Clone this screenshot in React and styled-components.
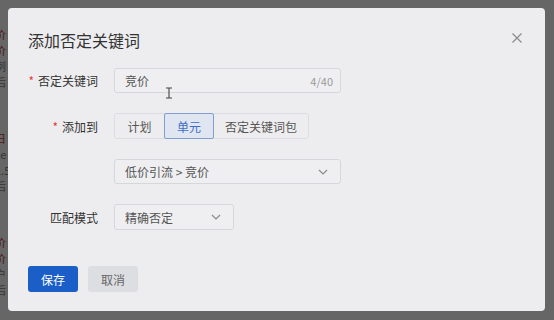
import React from 'react';
import styled, { createGlobalStyle } from 'styled-components';

const GlobalStyle = createGlobalStyle`
  html, body {
    margin: 0;
    padding: 0;
    width: 554px;
    height: 320px;
    overflow: hidden;
    background: #ffffff;
    font-family: "Noto Sans CJK SC", "Noto Sans", sans-serif;
  }
`;

const Page = styled.div`
  width: 554px;
  height: 320px;
  position: relative;
  overflow: hidden;
`;

const PageText = styled.div`
  display: flex;
  flex-direction: column;
  padding: 26px 0 0 0;
  margin-left: -5px;
  font-size: 11px;
  line-height: 16px;
  .group {
    display: flex;
    flex-direction: column;
    margin-bottom: 40px;
  }
  .red { color: #b8453c; }
  .grey { color: #888; }
`;

const Overlay = styled.div`
  position: absolute;
  inset: 0;
  background: rgba(0, 0, 0, 0.6);
  display: flex;
  padding: 8px 9px 9px 8px;
  box-sizing: border-box;
`;

const Modal = styled.div`
  flex: 1;
  background: #ededef;
  border-radius: 4px;
  padding: 22px 20px 19px 20px;
  display: flex;
  flex-direction: column;
  position: relative;
`;

const Header = styled.div`
  display: flex;
  align-items: center;
  justify-content: space-between;
  height: 20px;
  margin-bottom: 18px;
  h2 {
    margin: 0;
    font-size: 16px;
    font-weight: 400;
    color: #333;
    line-height: 20px;
  }
`;

const Close = styled.button`
  border: 0;
  background: none;
  padding: 0;
  margin-right: 2px;
  margin-top: -4px;
  width: 12px;
  height: 12px;
  display: flex;
  svg { display: block; }
`;

const Form = styled.div`
  display: flex;
  flex-direction: column;
  gap: 20px;
`;

const Row = styled.div`
  display: flex;
  align-items: center;
  gap: 16px;
`;

const Label = styled.div`
  width: 70px;
  text-align: right;
  font-size: 12px;
  color: #333;
  white-space: nowrap;
  span {
    color: #e0403a;
    margin-right: 4px;
  }
`;

const Field = styled.div`
  width: ${p => p.$w}px;
  height: ${p => p.$h || 25}px;
  box-sizing: border-box;
  border: 1px solid #d6d7da;
  border-radius: 3px;
  background: #efeff1;
  display: flex;
  align-items: center;
  justify-content: space-between;
  padding: 0 10px 0 10px;
  font-size: 12px;
  color: #555;
  .count { color: #9a9a9a; font-size: 11px; margin-right: -3px; }
  svg { margin-right: 2px; }
`;

const Segments = styled.div`
  display: flex;
  height: 26px;
  border: 1px solid #dcdde0;
  border-radius: 3px;
  box-sizing: border-box;
`;

const Segment = styled.div`
  width: ${p => p.$w}px;
  box-sizing: border-box;
  display: flex;
  align-items: center;
  justify-content: center;
  font-size: 12px;
  color: ${p => (p.$active ? '#3d6ec0' : '#555')};
  background: ${p => (p.$active ? '#dfe6f2' : 'transparent')};
  border: ${p => (p.$active ? '1px solid #7f9fd2' : '0')};
  margin: ${p => (p.$active ? '-1px 0' : '0')};
  border-radius: ${p => (p.$active ? '2px' : '0')};
`;

const Footer = styled.div`
  margin-top: auto;
  display: flex;
  gap: 10px;
`;

const Button = styled.button`
  width: 50px;
  height: 26px;
  border: 0;
  border-radius: 3px;
  font-family: inherit;
  font-size: 12px;
  background: ${p => (p.$primary ? '#1b5ec7' : '#dcdee2')};
  color: ${p => (p.$primary ? '#fff' : '#666')};
  padding: 0;
`;

const Cursor = styled.svg`
  position: absolute;
  left: 157px;
  top: 79px;
`;

const Chevron = () => (
  <svg width="10" height="6" viewBox="0 0 10 6">
    <polyline points="1,1 5,5 9,1" fill="none" stroke="#8a8a8a" strokeWidth="1.2" />
  </svg>
);

export default function App() {
  return (
    <Page>
      <GlobalStyle />
      <PageText>
        <div className="group">
          <span className="red">价</span>
          <span className="red">价</span>
          <span className="grey">例</span>
          <span className="grey">后</span>
        </div>
        <div className="group">
          <span className="red">日</span>
          <span className="grey">se</span>
          <span className="grey">1.5</span>
          <span className="grey">后</span>
        </div>
        <div className="group">
          <span className="red">价</span>
          <span className="red">价</span>
          <span className="grey">户</span>
          <span className="grey">后</span>
        </div>
      </PageText>
      <Overlay>
        <Modal>
          <Header>
            <h2>添加否定关键词</h2>
            <Close aria-label="关闭">
              <svg width="12" height="12" viewBox="0 0 12 12">
                <path d="M1.5 1.5 L10.5 10.5 M10.5 1.5 L1.5 10.5" stroke="#8c8c8c" strokeWidth="1.3" />
              </svg>
            </Close>
          </Header>
          <Form>
            <Row>
              <Label><span>*</span>否定关键词</Label>
              <Field $w={227}>
                <span>竞价</span>
                <span className="count">4/40</span>
              </Field>
            </Row>
            <Row>
              <Label><span>*</span>添加到</Label>
              <Segments>
                <Segment $w={49}>计划</Segment>
                <Segment $w={50} $active>单元</Segment>
                <Segment $w={94}>否定关键词包</Segment>
              </Segments>
            </Row>
            <Row>
              <Label />
              <Field $w={227}>
                <span>低价引流 &gt; 竞价</span>
                <Chevron />
              </Field>
            </Row>
            <Row>
              <Label>匹配模式</Label>
              <Field $w={120} $h={26}>
                <span>精确否定</span>
                <Chevron />
              </Field>
            </Row>
          </Form>
          <Footer>
            <Button $primary>保存</Button>
            <Button>取消</Button>
          </Footer>
          <Cursor width="8" height="12" viewBox="0 0 8 12">
            <path d="M1 1 H7 M4 1 V11 M1 11 H7" stroke="#444" strokeWidth="1.1" fill="none" />
          </Cursor>
        </Modal>
      </Overlay>
    </Page>
  );
}
